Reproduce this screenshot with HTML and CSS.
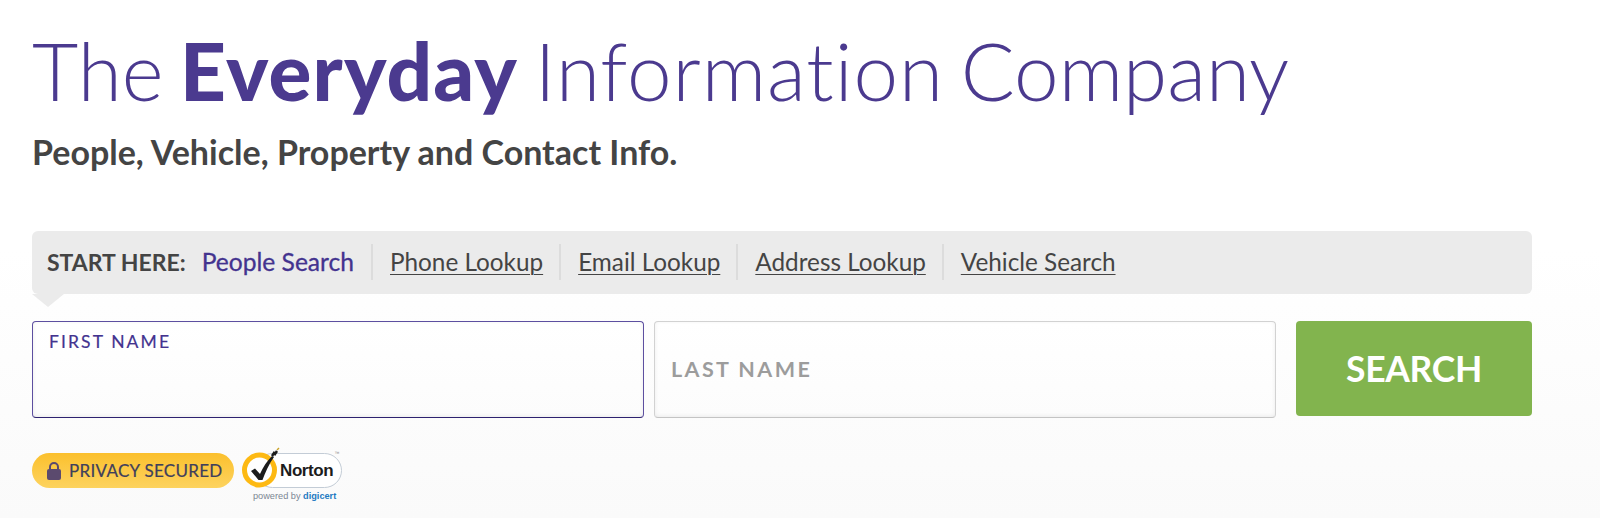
FILE: index.html
```html
<!DOCTYPE html>
<html lang="en">
<head>
<meta charset="utf-8">
<title>The Everyday Information Company</title>
<link rel="stylesheet" href="styles.css">
</head>
<body>
<main class="hero">
  <h1 class="title">The <strong>Everyday</strong> <span class="title-wide">Information</span> Company</h1>
  <p class="subtitle">People, Vehicle, Property and Contact Info.</p>
  <nav class="tabs">
    <span class="tabs-label">START HERE:</span>
    <a class="tab tab-active" href="#">People Search</a>
    <a class="tab" href="#">Phone Lookup</a>
    <a class="tab" href="#">Email Lookup</a>
    <a class="tab" href="#">Address Lookup</a>
    <a class="tab" href="#">Vehicle Search</a>
  </nav>
  <form class="search">
    <label class="field field-focus"><span class="field-label">FIRST NAME</span></label>
    <label class="field"><span class="field-label">LAST NAME</span></label>
    <button class="submit" type="button">SEARCH</button>
  </form>
  <div class="trust">
    <div class="privacy">
      <svg class="lock" viewBox="0 0 16 20" width="16" height="20" aria-hidden="true">
        <path d="M4 9V6a4 4 0 0 1 8 0v3" fill="none" stroke="#5b4a6e" stroke-width="2"/>
        <rect x="1" y="8" width="14" height="11" rx="2" fill="#5b4a6e"/>
      </svg>
      <span>PRIVACY SECURED</span>
    </div>
    <div class="norton">
      <div class="norton-top">
        <div class="norton-pill">Norton<sup class="tm">™</sup></div>
        <svg class="norton-mark" viewBox="0 0 44 46" width="44" height="46" aria-hidden="true">
          <circle cx="18.500" cy="24" r="15" fill="#fff" stroke="#fdb913" stroke-width="5"/>
          <path d="M10 25l4-2.500 5 5.500C22 21 26 15 31 10l2 1C28 18 24 27 21.500 34h-4z" fill="#1c1c1c"/>
          <path d="M31 10l2-3 1 1 2-3" fill="none" stroke="#1c1c1c" stroke-width="2.500"/>
          <path d="M36 4l2-2" stroke="#c9a227" stroke-width="1.500"/>
        </svg>
      </div>
      <div class="powered">powered by <b>digicert</b></div>
    </div>
  </div>
</main>
</body>
</html>
```
FILE: styles.css
```css
* { box-sizing: border-box; }
html, body { margin: 0; height: 518px; overflow: hidden; }
body {
  font-family: Lato, "Liberation Sans", sans-serif;
  font-variant-ligatures: none;
  background: linear-gradient(#ffffff 0, #ffffff 250px, #fafafa 518px);
}
.hero { width: 1500px; margin-left: 32px; padding-top: 22px; }
.title {
  margin: 0;
  font-size: 80px;
  line-height: 96px;
  font-weight: 300;
  word-spacing: -5px;
  color: #4b3a8f;
  white-space: nowrap;
}
.title strong { font-weight: 900; letter-spacing: 1.200px; }
.title-wide { letter-spacing: 0.950px; }
.subtitle {
  margin: 13px 0 0;
  font-size: 34px;
  line-height: 42px;
  font-weight: 700;
  color: #444444;
}
.tabs {
  position: relative;
  display: flex;
  align-items: center;
  height: 63px;
  margin-top: 58px;
  padding-left: 15px;
  padding-bottom: 2px;
  background: #ebebeb;
  border-radius: 6px;
}
.tabs::after {
  content: "";
  position: absolute;
  left: 0;
  bottom: -13px;
  border-style: solid;
  border-width: 13px 16px 0 16px;
  border-color: #ebebeb transparent transparent transparent;
}
.tabs-label {
  font-size: 23px;
  font-weight: 700;
  color: #444444;
  margin-right: 16px;
}
.tab {
  display: flex;
  align-items: center;
  height: 36px;
  font-size: 24.300px;
  color: #444444;
  text-decoration: underline;
  text-underline-offset: 3px;
  text-decoration-thickness: 1px;
  padding: 0 16px 0 17px;
  border-left: 2px solid #dcdcdc;
}
.tab-active {
  padding-left: 0;
  padding-right: 17px;
  border-left: 0;
  font-size: 24.600px;
  color: #43338f;
  -webkit-text-stroke: 0.3px #43338f;
  text-decoration: none;
}
.search {
  display: flex;
  height: 97px;
  margin-top: 27px;
}
.field {
  display: block;
  flex: 0 0 auto;
  width: 622px;
  height: 97px;
  margin-right: 10px;
  padding: 35px 16px 0;
  background: linear-gradient(#ffffff, #fcfcfc);
  border: 1px solid #d2d2d2;
  border-bottom-color: #c4c4c4;
  border-radius: 4px;
  box-shadow: inset 0 -1px 4px rgba(0,0,0,0.07);
}
.field-focus {
  width: 612px;
  padding-top: 9px;
  border-color: #5d4fa0;
  border-bottom-color: #2e2270;
}
.field-label {
  display: block;
  font-size: 21.500px;
  line-height: 24px;
  font-weight: 700;
  letter-spacing: 2.400px;
  color: #9c9c9c;
}
.field-focus .field-label {
  font-size: 17.500px;
  line-height: 22px;
  font-weight: 400;
  letter-spacing: 2.100px;
  color: #43338f;
  -webkit-text-stroke: 0.2px #43338f;
}
.submit {
  width: 236px;
  height: 95px;
  margin-left: 10px;
  border: 0;
  border-radius: 4px;
  background: #82b44e;
  color: #ffffff;
  font-family: inherit;
  font-size: 35.500px;
  font-weight: 700;
  letter-spacing: -0.3px;
}
.trust {
  display: flex;
  align-items: flex-start;
  margin-top: 28px;
}
.privacy {
  display: flex;
  align-items: center;
  gap: 7px;
  width: 202px;
  height: 35px;
  margin-top: 7px;
  padding-left: 14px;
  border-radius: 18px;
  background: linear-gradient(#fbc02d, #fdd35f);
  color: #3f3f5c;
  -webkit-text-stroke: 0.2px #3f3f5c;
  font-size: 17px;
  letter-spacing: 0.3px;
  white-space: nowrap;
}
.norton { margin-left: 7px; width: 102px; }
.norton-top { position: relative; height: 44px; }
.norton-pill {
  position: absolute;
  left: 14px;
  top: 7px;
  width: 87px;
  height: 35px;
  padding-left: 24px;
  line-height: 34px;
  font-family: "Liberation Sans", sans-serif;
  font-size: 17px;
  font-weight: 700;
  color: #1c1c1c;
  letter-spacing: -0.4px;
  background: #fff;
  border: 1.500px solid #c3ccd6;
  border-radius: 18px;
  white-space: nowrap;
}
.tm {
  position: absolute;
  right: 2px;
  top: -5px;
  font-size: 5px;
  line-height: 8px;
  font-weight: 400;
  color: #888;
}
.norton-mark { position: absolute; left: 0; top: 0; }
.powered {
  margin: 1px 0 0 12px;
  font-family: "Liberation Sans", sans-serif;
  font-size: 9.200px;
  line-height: 10px;
  color: #7b8794;
  white-space: nowrap;
}
.powered b { color: #1f7ac2; }
```
